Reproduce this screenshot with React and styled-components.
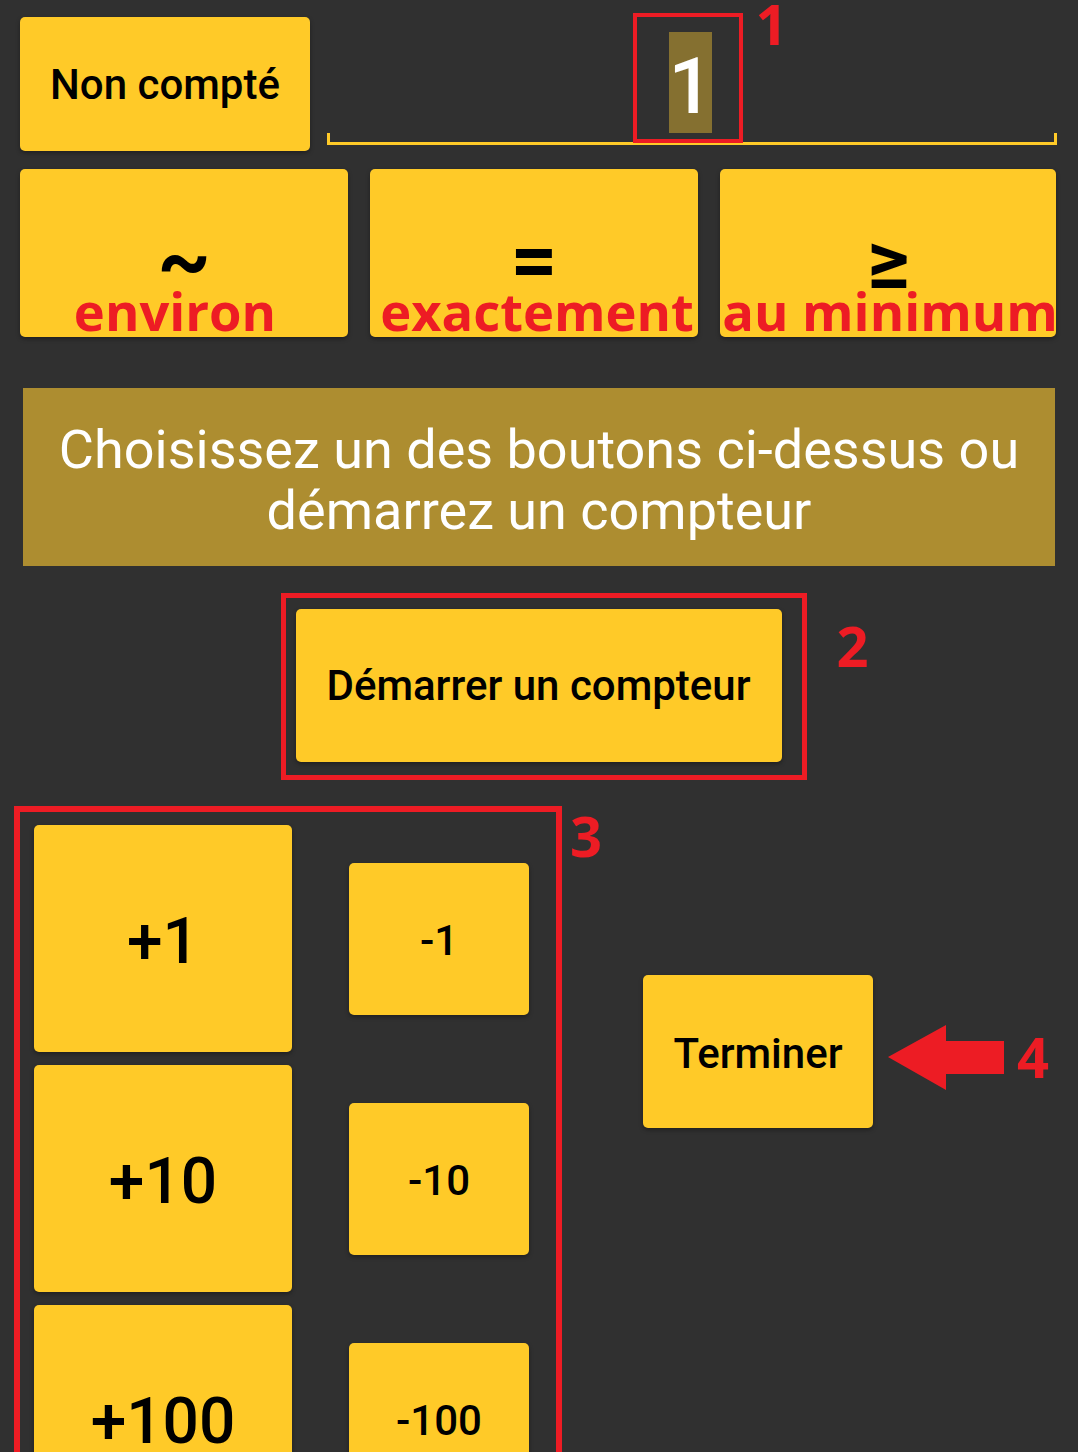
import React from "react";
import styled, { createGlobalStyle } from "styled-components";

const YELLOW = "#FFCA28";
const RED = "#ED1C24";

const Global = createGlobalStyle`
  html, body {
    margin: 0;
    padding: 0;
    background: #303030;
  }
  body {
    font-family: Roboto, "Noto Sans", sans-serif;
  }
  * { box-sizing: border-box; }
`;

const Page = styled.div`
  display: flex;
  flex-direction: column;
  padding: 17px 21px 0 20px;
  min-height: 1452px;
  overflow: hidden;
`;

const TopRow = styled.div`
  display: flex;
  align-items: flex-start;
  gap: 17px;
`;

const Button = styled.div`
  background: ${YELLOW};
  color: #000;
  border-radius: 5px;
  box-shadow: 0 2px 4px rgba(0, 0, 0, 0.35);
  display: flex;
  align-items: center;
  justify-content: center;
  font-family: Roboto, sans-serif;
  font-weight: 500;
  font-size: ${(p) => p.$size || 42}px;
  padding-top: ${(p) => p.$pt || 0}px;
  width: ${(p) => p.$w}px;
  height: ${(p) => p.$h}px;
  flex-shrink: 0;
  position: relative;
`;

const Field = styled.div`
  position: relative;
  flex: 1;
  height: 128px;
  border-bottom: 3px solid ${YELLOW};
  display: flex;
  justify-content: center;
  align-items: flex-end;
  padding-bottom: 9px;
  padding-right: 4px;

  &::before,
  &::after {
    content: "";
    position: absolute;
    bottom: -3px;
    width: 3px;
    height: 12px;
    background: ${YELLOW};
  }
  &::before { left: 0; }
  &::after { right: 0; }
`;

const Anchor = styled.div`
  position: relative;
  display: inline-block;
`;

const Selected = styled.span`
  display: inline-block;
  background: #857030;
  color: #fff;
  font-family: Roboto, sans-serif;
  font-weight: 500;
  font-size: 78px;
  height: 101px;
  line-height: 109px;
  width: 43px;
  text-align: center;
  overflow: visible;
`;

const Frame = styled.div`
  position: absolute;
  top: ${(p) => p.$t}px;
  left: ${(p) => p.$l}px;
  right: ${(p) => p.$r}px;
  bottom: ${(p) => p.$b}px;
  border: ${(p) => p.$bw}px solid ${RED};
  pointer-events: none;
`;

const Mark = styled.span`
  position: absolute;
  top: ${(p) => p.$t}px;
  left: ${(p) => p.$l}px;
  font-family: "Open Sans", sans-serif;
  font-weight: 700;
  font-size: 56px;
  line-height: 56px;
  color: ${RED};
  white-space: nowrap;
`;

const ChoiceRow = styled.div`
  margin-top: 18px;
  display: grid;
  grid-template-columns: 328px 328px 336px;
  column-gap: 22px;
  height: 168px;
`;

const Choice = styled.div`
  background: ${YELLOW};
  border-radius: 5px;
  box-shadow: 0 2px 4px rgba(0, 0, 0, 0.35);
  display: flex;
  flex-direction: column;
  align-items: center;
  justify-content: flex-end;
`;

const Symbol = styled.span`
  font-family: Roboto, sans-serif;
  font-weight: 700;
  font-size: 82px;
  line-height: 44px;
  height: 44px;
  margin-bottom: 3px;
  color: #000;
`;

const RedLabel = styled.span`
  font-family: "Open Sans", sans-serif;
  font-weight: 700;
  font-size: 52.5px;
  line-height: 52px;
  color: ${RED};
  white-space: nowrap;
  transform: translateX(${(p) => p.$dx || 0}px);
`;

const Banner = styled.div`
  margin: 51px 2px 0 3px;
  background: #ad8d30;
  color: #fff;
  font-family: Roboto, sans-serif;
  font-size: 54px;
  line-height: 61px;
  text-align: center;
  padding: 31px 10px 25px;
`;

const StartWrap = styled.div`
  margin-top: 43px;
  align-self: center;
  position: relative;
`;

const Bottom = styled.div`
  margin-top: 63px;
  display: flex;
  align-items: flex-start;
  padding-left: 14px;
`;

const Counter = styled.div`
  position: relative;
  display: grid;
  grid-template-columns: 258px 180px;
  grid-auto-rows: 227px;
  column-gap: 57px;
  row-gap: 13px;
  align-items: center;
`;

const FinishWrap = styled.div`
  position: relative;
  margin-left: 114px;
  margin-top: 150px;
`;

const Arrow = styled.svg`
  position: absolute;
  left: 245px;
  top: 50px;
`;

const steps = [1, 10, 100];

export default function App() {
  return (
    <>
      <Global />
      <Page>
        <TopRow>
          <Button $w={290} $h={134}>Non compté</Button>
          <Field>
            <Anchor>
              <Selected>1</Selected>
              <Frame $t={-19} $l={-36} $r={-31} $b={-10} $bw={4} />
              <Mark $t={-37} $l={87}>1</Mark>
            </Anchor>
          </Field>
        </TopRow>

        <ChoiceRow>
          <Choice>
            <Symbol>~</Symbol>
            <RedLabel $dx={-9}>environ</RedLabel>
          </Choice>
          <Choice>
            <Symbol>=</Symbol>
            <RedLabel $dx={3}>exactement</RedLabel>
          </Choice>
          <Choice>
            <Symbol>≥</Symbol>
            <RedLabel $dx={2}>au minimum</RedLabel>
          </Choice>
        </ChoiceRow>

        <Banner>
          Choisissez un des boutons ci-dessus ou
          <br />
          démarrez un compteur
        </Banner>

        <StartWrap>
          <Button $w={486} $h={153}>Démarrer un compteur</Button>
          <Frame $t={-16} $l={-15} $r={-25} $b={-18} $bw={5} />
          <Mark $t={8} $l={541}>2</Mark>
        </StartWrap>

        <Bottom>
          <Counter>
            {steps.map((s) => (
              <React.Fragment key={s}>
                <Button $w={258} $h={227} $size={64} $pt={6}>+{s}</Button>
                <Button $w={180} $h={152} $size={42} $pt={4}>-{s}</Button>
              </React.Fragment>
            ))}
            <Frame $t={-19} $l={-20} $r={-33} $b={-300} $bw={6} />
            <Mark $t={-18} $l={536}>3</Mark>
          </Counter>
          <FinishWrap>
            <Button $w={230} $h={153} $pt={4}>Terminer</Button>
            <Arrow width="116" height="65" viewBox="0 0 116 65">
              <polygon
                points="0,32 58,0 58,16 116,16 116,49 58,49 58,65"
                fill={RED}
              />
            </Arrow>
            <Mark $t={53} $l={374}>4</Mark>
          </FinishWrap>
        </Bottom>
      </Page>
    </>
  );
}
